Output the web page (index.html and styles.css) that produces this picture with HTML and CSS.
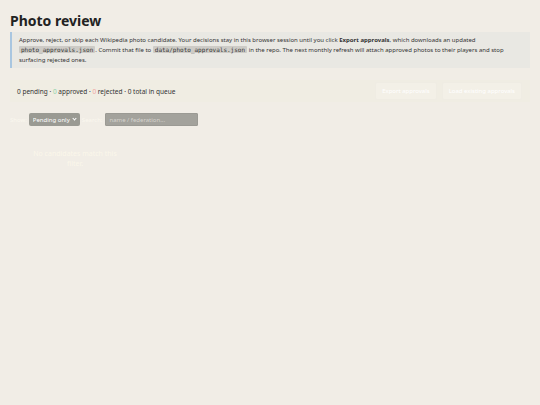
FILE: index.html
```html
<!DOCTYPE html>
<html lang="en">
<head>
    <meta charset="UTF-8">
    <meta name="viewport" content="width=device-width, initial-scale=1.0">
    <title>Photo review</title>
    <link rel="stylesheet" href="styles.css">
</head>
<body>
    <h1>Photo review</h1>
    <div class="intro">
        Approve, reject, or skip each Wikipedia photo candidate. Your decisions stay in this browser session until you click <b>Export approvals</b>, which downloads an updated <code>photo_approvals.json</code>. Commit that file to <code>data/photo_approvals.json</code> in the repo. The next monthly refresh will attach approved photos to their players and stop surfacing rejected ones.
    </div>

    <div class="stats-bar">
        <div class="stats">
            <span id="pendingCount">0</span> pending &middot;
            <span class="ok">0</span> approved &middot;
            <span class="bad">0</span> rejected &middot;
            <span id="totalCount">0</span> total in queue
        </div>
        <div class="actions">
            <button>Export approvals</button>
            <button>Load existing approvals</button>
        </div>
    </div>

    <div class="filters">
        <label>Show:</label>
        <span class="select-wrap">
            <select>
                <option>Pending only</option>
                <option>Approved</option>
                <option>Rejected</option>
                <option>All</option>
            </select>
        </span>
        <label>Search:</label>
        <input type="text" placeholder="name / federation...">
    </div>

    <div class="grid">
        <div class="empty">No candidates match this filter.</div>
    </div>
</body>
</html>
```

FILE: styles.css
```css
body {
    font-family: "Noto Sans", "Open Sans", sans-serif;
    background-color: #f1ede6;
    color: #2a2a2a;
    margin: 0;
    padding: 11px 10px 10px;
}
h1 {
    font-size: 14px;
    margin: 0 0 2px;
    color: #222;
}
.intro {
    background-color: #e9e8e3;
    border-left: 2px solid #a9c6e0;
    padding: 3px 8px 3px 7px;
    font-size: 6px;
    line-height: 10px;
    color: #333;
}
.intro code {
    font-family: "DejaVu Sans Mono", monospace;
    font-size: 6px;
    line-height: 7px;
    background-color: #cdcbc6;
    padding: 0 2px;
    border-radius: 1px;
}
.stats-bar {
    display: flex;
    justify-content: space-between;
    align-items: center;
    background-color: #f0ede3;
    margin-top: 12px;
    padding: 0 8px 0 7px;
    height: 22px;
}
.stats {
    font-size: 6.5px;
    color: #333;
}
.ok {
    color: #8fd3a8;
}
.bad {
    color: #f0a6a0;
}
.actions {
    display: flex;
    gap: 5px;
}
button {
    font-family: inherit;
    font-size: 6px;
    color: #fff;
    background-color: #f3f0e7;
    border: 1px solid #efece3;
    border-radius: 2px;
    padding: 4px 6px;
}
.filters {
    display: flex;
    align-items: center;
    gap: 2px;
    margin-top: 11px;
    font-size: 6px;
}
.filters label {
    color: #fbf8ef;
}
.select-wrap {
    position: relative;
    display: inline-block;
}
.select-wrap::after {
    content: "";
    position: absolute;
    right: 4px;
    top: 4px;
    width: 2px;
    height: 2px;
    border-right: 1px solid #fff;
    border-bottom: 1px solid #fff;
    transform: rotate(45deg);
    pointer-events: none;
}
select {
    appearance: none;
    font-family: inherit;
    font-size: 6px;
    background-color: #9a9a93;
    color: #fff;
    border: none;
    border-radius: 2px;
    width: 51px;
    height: 13px;
    padding: 0 4px;
}
input {
    font-family: inherit;
    font-size: 6px;
    background-color: #a3a29c;
    border: 1px solid #9b9a94;
    border-radius: 1px;
    width: 85px;
    height: 11px;
    padding: 0 3px;
    margin-left: 1px;
}
input::placeholder {
    color: #d6d4ce;
}
.grid {
    display: grid;
    grid-template-columns: repeat(auto-fill, minmax(125px, 1fr));
    margin-top: 19px;
}
.empty {
    padding: 4px 20px;
    text-align: center;
    font-size: 7px;
    line-height: 10px;
    color: #fbf7ea;
}
```
